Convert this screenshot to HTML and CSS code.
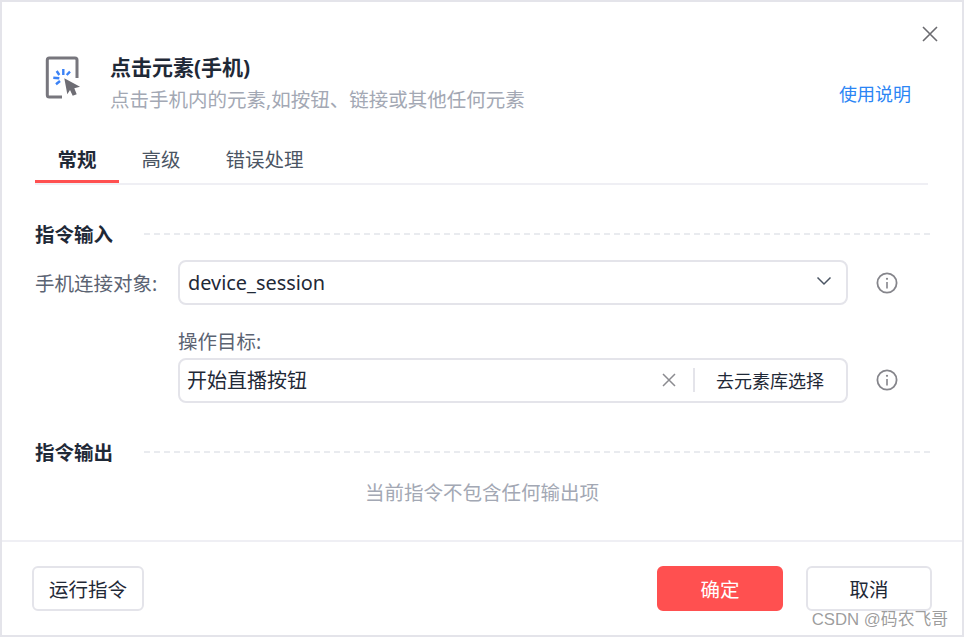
FILE: index.html
```html
<!DOCTYPE html>
<html lang="en">
<head>
  <meta charset="UTF-8">
  <meta name="viewport" content="width=device-width, initial-scale=1.0">
  <title>点击元素(手机)</title>
  <link rel="stylesheet" href="styles.css">
</head>
<body>
  <div class="dialog">
    <div class="close-row">
      <svg class="close" width="18" height="18" viewBox="0 0 18 18"><path d="M2 2L16 16M16 2L2 16" fill="none" stroke="#6b6b70" stroke-width="1.6"/></svg>
    </div>

    <div class="header">
      <svg class="header-icon" width="37" height="44" viewBox="0 0 37 44">
        <path d="M18 41H5.3Q3.3 41 3.3 39V4Q3.3 2 5.3 2H31Q33 2 33 4V22" fill="none" stroke="#77767d" stroke-width="3"/>
        <path d="M20.3 22.3L36 30.7L30.3 32.3L32.7 38.3L28.7 39.7L26 34L23.3 38.3Z" fill="#6e6d74"/>
        <path d="M19.3 13V19M26 15.7L22.7 19M12.7 15L15.3 19M9.3 21.7L15.3 22.3M12 28.3L16 25" fill="none" stroke="#3b82f6" stroke-width="2.4"/>
      </svg>
      <div class="header-text">
        <h1>点击元素(手机)</h1>
        <p>点击手机内的元素,如按钮、链接或其他任何元素</p>
      </div>
      <a class="help-link">使用说明</a>
    </div>

    <div class="tabs">
      <div class="tab active">常规</div>
      <div class="tab">高级</div>
      <div class="tab">错误处理</div>
    </div>

    <div class="section-title section-input">
      <span>指令输入</span>
      <i class="dash"></i>
    </div>

    <div class="form-row">
      <label class="row-label">手机连接对象:</label>
      <div class="select">
        <span>device_session</span>
        <svg class="chevron" width="16" height="10" viewBox="0 0 16 10"><path d="M1.5 1.5L8 8L14.5 1.5" fill="none" stroke="#4b5563" stroke-width="1.5"/></svg>
      </div>
      <svg class="info" width="22" height="22" viewBox="0 0 22 22"><circle cx="11" cy="11" r="9.6" fill="none" stroke="#85858b" stroke-width="1.8"/><path d="M11 10V16.5" stroke="#85858b" stroke-width="1.6"/><circle cx="11" cy="6.8" r="1.1" fill="#85858b"/></svg>
    </div>

    <div class="form-row form-row-target">
      <div class="row-label"></div>
      <div class="target">
        <label class="target-label">操作目标:</label>
        <div class="input-group">
          <span class="input-value">开始直播按钮</span>
          <svg class="clear" width="14" height="14" viewBox="0 0 14 14"><path d="M1 1L13 13M13 1L1 13" fill="none" stroke="#8b8b90" stroke-width="1.5"/></svg>
          <i class="group-divider"></i>
          <span class="group-button">去元素库选择</span>
        </div>
      </div>
      <svg class="info" width="22" height="22" viewBox="0 0 22 22"><circle cx="11" cy="11" r="9.6" fill="none" stroke="#85858b" stroke-width="1.8"/><path d="M11 10V16.5" stroke="#85858b" stroke-width="1.6"/><circle cx="11" cy="6.8" r="1.1" fill="#85858b"/></svg>
    </div>

    <div class="section-title section-output">
      <span>指令输出</span>
      <i class="dash"></i>
    </div>
    <p class="empty">当前指令不包含任何输出项</p>

    <div class="footer">
      <button class="btn">运行指令</button>
      <div class="footer-right">
        <button class="btn btn-primary">确定</button>
        <button class="btn btn-cancel">取消</button>
      </div>
    </div>

    <div class="watermark">CSDN @码农飞哥</div>
  </div>
</body>
</html>
```

FILE: styles.css
```css
* {
  box-sizing: border-box;
}
body {
  margin: 0;
  font-family: "Noto Sans", "Noto Sans CJK SC", sans-serif;
  background: #fff;
  color: #1f2937;
}
.dialog {
  position: relative;
  display: flex;
  flex-direction: column;
  width: 964px;
  height: 637px;
  border: 2px solid #e4e4ea;
  background: #fff;
  overflow: hidden;
}
.close-row {
  display: flex;
  justify-content: flex-end;
  height: 54px;
  padding: 23px 23px 0 0;
}
.header {
  display: flex;
  align-items: flex-start;
  height: 56px;
  padding-left: 42px;
}
.header-icon {
  flex: none;
  margin-right: 29px;
}
.header-text {
  flex: 1;
}
.header-text h1 {
  margin: 0;
  font-size: 21px;
  font-weight: 700;
  line-height: 22px;
}
.header-text p {
  margin: 9px 0 0;
  font-size: 19.5px;
  line-height: 26px;
  color: #a3a8b4;
}
.help-link {
  margin: 26px 51px 0 0;
  font-size: 18px;
  line-height: 24px;
  color: #2b85f5;
}
.tabs {
  display: flex;
  height: 57px;
  margin: 16px 34px 0 33px;
  padding-top: 16px;
  border-bottom: 2px solid #efeff4;
}
.tab {
  height: 39px;
  padding: 0 22.5px;
  font-size: 19.5px;
  line-height: 32px;
  color: #4b5563;
}
.tab.active {
  font-weight: 700;
  color: #1f2937;
  border-bottom: 3px solid #ff5050;
  height: 39px;
}
.section-title {
  display: flex;
  align-items: center;
  margin: 0 32px 0 33px;
  font-size: 19.5px;
  font-weight: 700;
  line-height: 30px;
}
.section-input {
  margin-top: 35px;
}
.section-output {
  margin-top: 35px;
}
.dash {
  flex: 1;
  margin: 0 0 2px 31px;
  border-top: 2px dashed #e9ebef;
}
.form-row {
  display: flex;
  align-items: center;
  margin: 10px 0 0 33px;
}
.form-row-target {
  align-items: flex-end;
  margin-top: 24px;
}
.row-label {
  width: 143px;
  font-size: 19.5px;
  color: #5b6372;
}
.select {
  display: flex;
  align-items: center;
  justify-content: space-between;
  width: 670px;
  height: 45px;
  padding: 0 14px 0 8px;
  border: 2px solid #e4e4ea;
  border-radius: 8px;
  font-size: 19.9px;
  color: #1f2937;
}
.chevron {
  margin-bottom: 4px;
}
.info {
  margin-left: 28px;
}
.form-row-target .info {
  margin-bottom: 12px;
}
.target {
  width: 670px;
}
.target-label {
  display: block;
  font-size: 19.5px;
  line-height: 26px;
  margin-bottom: 3px;
  color: #5b6372;
}
.input-group {
  display: flex;
  align-items: center;
  height: 45px;
  padding-bottom: 2px;
  border: 2px solid #e4e4ea;
  border-radius: 8px;
}
.input-value {
  flex: 1;
  padding-left: 7px;
  font-size: 20px;
}
.clear {
  margin-right: 17px;
}
.group-divider {
  width: 2px;
  height: 24px;
  background: #e4e4ea;
}
.group-button {
  width: 151px;
  padding-right: 1px;
  text-align: center;
  font-size: 18px;
}
.empty {
  margin: 11px 0 0;
  text-align: center;
  font-size: 19.5px;
  line-height: 28px;
  color: #a3a8b4;
}
.footer {
  display: flex;
  justify-content: space-between;
  margin-top: auto;
  height: 95px;
  padding: 24px 30px 0;
  border-top: 2px solid #efeff4;
}
.footer-right {
  display: flex;
  gap: 23px;
}
.btn {
  width: 112px;
  height: 45px;
  padding: 0;
  border: 2px solid #e4e4ea;
  border-radius: 6px;
  background: #fff;
  font-family: inherit;
  font-size: 19.5px;
  color: #1f2937;
}
.btn-primary {
  width: 126px;
  border-color: #ff5050;
  background: #ff5050;
  color: #fff;
}
.btn-cancel {
  width: 126px;
}
.watermark {
  position: absolute;
  right: 14px;
  bottom: 4px;
  font-family: "Liberation Sans", "Noto Sans CJK SC", sans-serif;
  font-size: 16.8px;
  line-height: 22px;
  color: rgba(90, 90, 90, 0.6);
}
```
